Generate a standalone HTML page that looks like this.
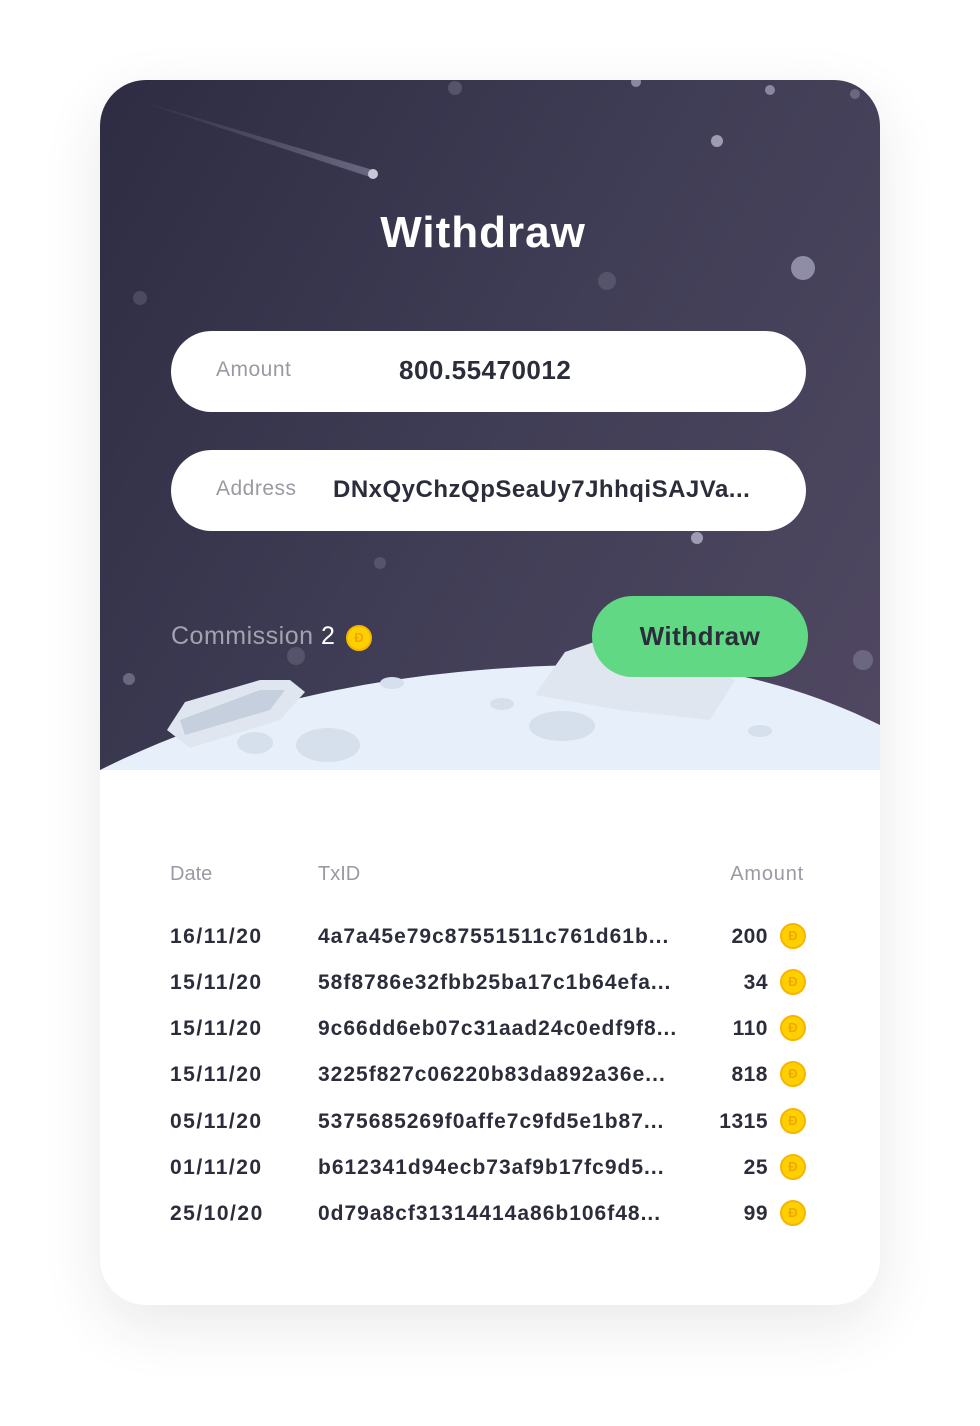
<!DOCTYPE html>
<html><head><meta charset="utf-8"><style>
body{margin:0;width:980px;height:1426px;background:#fff;font-family:"Liberation Sans",sans-serif;position:relative;overflow:hidden}
.card{position:absolute;left:100px;top:80px;width:780px;height:1225px;border-radius:46px;background:#fff;box-shadow:0 20px 60px rgba(40,40,60,.10);overflow:hidden}
.top{position:absolute;left:0;top:0;width:780px;height:690px;background:linear-gradient(120deg,#2d2c42 0%,#3f3d55 50%,#514862 100%)}
.abs{position:absolute}
.pill{position:absolute;left:71px;width:635px;height:81px;border-radius:41px;background:#fff}
.lbl{position:absolute;left:45px;top:27px;font-size:21px;color:#9a9aa2;letter-spacing:.5px}
.val{position:absolute;top:24px;font-size:26px;font-weight:bold;color:#2c2d3a;letter-spacing:.5px}
.coin{display:inline-block;width:22px;height:22px;border-radius:50%;background:#ffd000;border:2px solid #f7b500;position:absolute;font-size:13px;font-weight:bold;color:#f0a800;text-align:center;line-height:22px}
.row{position:absolute;left:70px;width:640px;font-size:21px;font-weight:bold;color:#2c2d3a}
.row span{position:absolute}
.row span.d{letter-spacing:1.5px}
.row span.t{letter-spacing:1px}
.row span.a{letter-spacing:.5px}
</style></head><body>
<div class="card">
 <div class="top">
  <svg class="abs" style="left:0;top:0" width="780" height="690">
   <defs><linearGradient id="g" x1="0" x2="1"><stop offset="0" stop-color="#5a5870" stop-opacity="0"/><stop offset="1" stop-color="#6a6880"/></linearGradient></defs>
   <polygon points="20,15 273,90 273,98" fill="url(#g)"/>
   <circle cx="273" cy="94" r="5" fill="#c9c8d6"/>
   <circle cx="355" cy="8" r="7" fill="#56546b"/>
   <circle cx="536" cy="2" r="5" fill="#8a88a0"/>
   <circle cx="670" cy="10" r="5" fill="#8a88a0"/>
   <circle cx="755" cy="14" r="5" fill="#6a6880"/>
   <circle cx="617" cy="61" r="6" fill="#9e9cb2"/>
   <circle cx="703" cy="188" r="12" fill="#8f8da5"/>
   <circle cx="507" cy="201" r="9" fill="#56546b"/>
   <circle cx="40" cy="218" r="7" fill="#4c4a60"/>
   <circle cx="280" cy="483" r="6" fill="#56546b"/>
   <circle cx="597" cy="458" r="6" fill="#9e9cb2"/>
   <circle cx="196" cy="576" r="9" fill="#55536a"/>
   <circle cx="29" cy="599" r="6" fill="#6a6880"/>
   <circle cx="763" cy="580" r="10" fill="#6a6880"/>
   <path d="M0 690 C150 615 330 580 560 585 C650 590 730 620 780 645 L780 690 Z" fill="#e6effa"/>
   <path d="M67 650 L85 622 L160 600 L190 600 L205 612 L180 640 L90 668 Z" fill="#dfe6ef"/>
   <path d="M80 640 L160 610 L185 610 L170 630 L85 655Z" fill="#c6cfdd"/>
   <path d="M435 615 L465 572 L500 560 L590 572 L635 600 L610 640 L520 630 Z" fill="#dfe6ef"/>
   <ellipse cx="228" cy="665" rx="32" ry="17" fill="#d6e0ec"/>
   <ellipse cx="462" cy="646" rx="33" ry="15" fill="#d6e0ec"/>
   <ellipse cx="155" cy="663" rx="18" ry="11" fill="#d6e0ec"/>
   <ellipse cx="292" cy="603" rx="12" ry="6" fill="#d6e0ec"/>
   <ellipse cx="402" cy="624" rx="12" ry="6" fill="#d6e0ec"/>
   <ellipse cx="660" cy="651" rx="12" ry="6" fill="#d6e0ec"/>
  </svg>
  <div class="abs" style="left:0;width:780px;top:128px;text-align:center;font-size:44px;font-weight:bold;color:#fff;letter-spacing:1px;margin-left:-7px">Withdraw</div>
  <div class="pill" style="top:251px"><span class="lbl">Amount</span><span class="val" style="left:228px">800.55470012</span></div>
  <div class="pill" style="top:370px"><span class="lbl">Address</span><span class="val" style="left:162px;font-size:24px;top:26px">DNxQyChzQpSeaUy7JhhqiSAJVa...</span></div>
  <div class="abs" style="left:71px;top:542px;font-size:25px;color:#a3a2ae;letter-spacing:.5px">Commission <span style="color:#fff">2</span></div>
  <span class="coin" style="left:246px;top:545px">Đ</span>
  <div class="abs" style="left:492px;top:516px;width:216px;height:81px;border-radius:41px;background:#61d884;text-align:center;line-height:81px;font-size:26px;font-weight:bold;color:#2c2d3a;letter-spacing:.5px">Withdraw</div>
 </div>
 <div class="row" style="top:783px;font-weight:normal;color:#9a9aa2;font-size:20px"><span style="left:0">Date</span><span style="left:148px">TxID</span><span style="right:6px;letter-spacing:.8px">Amount</span></div>
 <div class="row" style="top:845px"><span class="d" style="left:0">16/11/20</span><span class="t" style="left:148px">4a7a45e79c87551511c761d61b...</span><span class="a" style="right:42px">200</span></div>
 <div class="row" style="top:891px"><span class="d" style="left:0">15/11/20</span><span class="t" style="left:148px">58f8786e32fbb25ba17c1b64efa...</span><span class="a" style="right:42px">34</span></div>
 <div class="row" style="top:937px"><span class="d" style="left:0">15/11/20</span><span class="t" style="left:148px">9c66dd6eb07c31aad24c0edf9f8...</span><span class="a" style="right:42px">110</span></div>
 <div class="row" style="top:983px"><span class="d" style="left:0">15/11/20</span><span class="t" style="left:148px">3225f827c06220b83da892a36e...</span><span class="a" style="right:42px">818</span></div>
 <div class="row" style="top:1030px"><span class="d" style="left:0">05/11/20</span><span class="t" style="left:148px">5375685269f0affe7c9fd5e1b87...</span><span class="a" style="right:42px">1315</span></div>
 <div class="row" style="top:1076px"><span class="d" style="left:0">01/11/20</span><span class="t" style="left:148px">b612341d94ecb73af9b17fc9d5...</span><span class="a" style="right:42px">25</span></div>
 <div class="row" style="top:1122px"><span class="d" style="left:0">25/10/20</span><span class="t" style="left:148px">0d79a8cf31314414a86b106f48...</span><span class="a" style="right:42px">99</span></div>
 <span class="coin" style="left:680px;top:843px">Đ</span>
 <span class="coin" style="left:680px;top:889px">Đ</span>
 <span class="coin" style="left:680px;top:935px">Đ</span>
 <span class="coin" style="left:680px;top:981px">Đ</span>
 <span class="coin" style="left:680px;top:1028px">Đ</span>
 <span class="coin" style="left:680px;top:1074px">Đ</span>
 <span class="coin" style="left:680px;top:1120px">Đ</span>
</div>
</body></html>
